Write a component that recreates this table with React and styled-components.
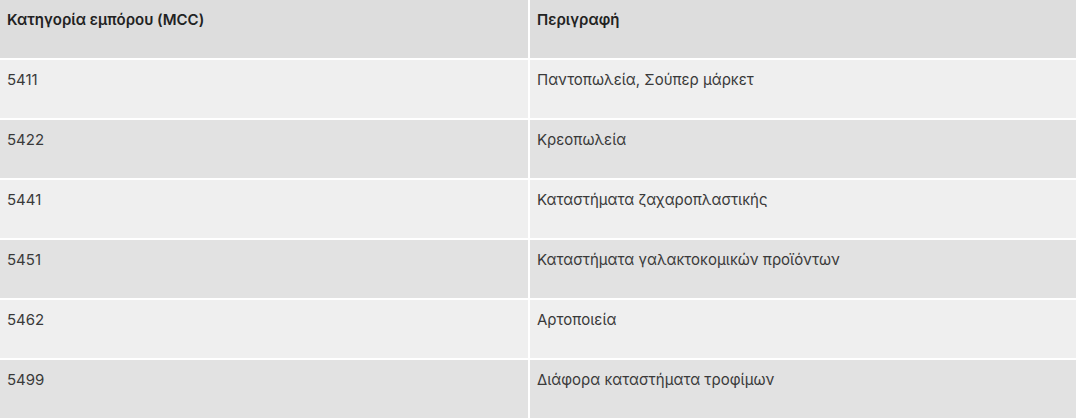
import styled, { createGlobalStyle } from "styled-components";

const GlobalStyle = createGlobalStyle`
  body {
    margin: 0;
    background: #ffffff;
    font-family: Inter, "Noto Sans", sans-serif;
  }
`;

const rows = [
  ["5411", "Παντοπωλεία, Σούπερ μάρκετ"],
  ["5422", "Κρεοπωλεία"],
  ["5441", "Καταστήματα ζαχαροπλαστικής"],
  ["5451", "Καταστήματα γαλακτοκομικών προϊόντων"],
  ["5462", "Αρτοποιεία"],
  ["5499", "Διάφορα καταστήματα τροφίμων"],
];

function App() {
  return (
    <>
      <GlobalStyle />
      <Table>
        <HeadCell>Κατηγορία εμπόρου (MCC)</HeadCell>
        <HeadCell>Περιγραφή</HeadCell>
        {rows.map(([code, desc], i) => (
          <Row key={code} $odd={i % 2 === 0}>
            <Cell>{code}</Cell>
            <Cell>{desc}</Cell>
          </Row>
        ))}
      </Table>
    </>
  );
}

const Table = styled.div`
  display: grid;
  grid-template-columns: 528px 1fr;
  grid-auto-rows: 58px;
  gap: 2px;
  background: #ffffff;
  width: 1076px;
`;

const HeadCell = styled.div`
  background: #dddddd;
  color: #222222;
  font-size: 15px;
  font-weight: 600;
  line-height: 20px;
  padding: 10px 7px;
`;

const Row = styled.div`
  display: contents;
  & > div {
    background: ${(p) => (p.$odd ? "#efefef" : "#e2e2e2")};
  }
`;

const Cell = styled.div`
  color: #3a3a3a;
  font-size: 15px;
  font-weight: 400;
  line-height: 20px;
  padding: 10px 7px;
`;

export default App;
